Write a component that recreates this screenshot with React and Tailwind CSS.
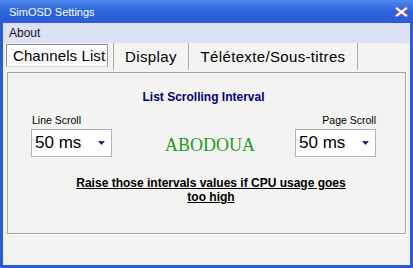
export default function App() {
  const sans = { fontFamily: '"Liberation Sans", Arial, sans-serif' };
  const serif = { fontFamily: '"Liberation Serif", "Times New Roman", serif' };
  const Arrow = () => (
    <svg width="7" height="4" viewBox="0 0 7 4" className="block">
      <polygon points="0,0 7,0 3.5,4" fill="#1c2a78" />
    </svg>
  );
  const Drop = () => (
    <div className="w-[81px] h-[28px] bg-white border border-[#aeb2b8] flex items-center pl-[3px] pr-[6px]">
      <span className="text-[17px] leading-[20px] text-black flex-1" style={sans}>50 ms</span>
      <Arrow />
    </div>
  );
  return (
    <div className="w-[413px] h-[268px] flex flex-col bg-[#2a5cd6] overflow-hidden" style={sans}>
      {/* title bar */}
      <div className="h-[23px] shrink-0 flex items-center px-[9px] bg-gradient-to-b from-[#4f88ec] via-[#2d63dc] to-[#2a5cd6]">
        <span className="text-[11px] text-white flex-1 pt-[1px]">SimOSD Settings</span>
        <svg width="13" height="10" viewBox="0 0 13 10" className="mr-[-4px] mt-[1px]">
          <path d="M2 1.5 L11 8.5 M11 1.5 L2 8.5" stroke="#d46cc0" strokeWidth="3.2" strokeLinecap="square" />
          <path d="M2 1.5 L11 8.5 M11 1.5 L2 8.5" stroke="#ffffff" strokeWidth="1.8" strokeLinecap="square" />
        </svg>
      </div>
      {/* body */}
      <div className="flex-1 mx-[3px] mb-[3px] bg-[#f3f3f1] flex flex-col">
        <div className="h-[20px] shrink-0 bg-[#dce2f3] flex items-center pl-[6px]">
          <span className="text-[12px] text-[#1a1030]">About</span>
        </div>
        {/* tabs */}
        <div className="h-[27px] shrink-0 flex items-stretch">
          <div className="w-[111px] border-r border-[#a8a8a8] pl-[3px] pt-[1px]">
            <div className="w-[102px] h-[23px] bg-[#fbfbfb] border-t border-l border-[#8a8a8a] border-r border-r-[#9a9a9a] border-b border-b-[#d8d8d8] flex items-center pl-[6px]">
              <span className="text-[15px] leading-[18px] text-black tracking-[0.1px]">Channels List</span>
            </div>
          </div>
          <div className="w-[75px] border-r border-[#a8a8a8] flex items-center justify-center">
            <span className="text-[15px] leading-[18px] text-black tracking-[0.4px]">Display</span>
          </div>
          <div className="w-[169px] border-r border-[#a8a8a8] flex items-center justify-center">
            <span className="text-[15px] leading-[18px] text-black tracking-[0.35px]">Télétexte/Sous-titres</span>
          </div>
        </div>
        {/* panel */}
        <div className="mt-[2px] mx-[4px] h-[162px] border border-[#a4a4a4] shadow-[1px_1px_0_#ffffff] flex flex-col">
          <div className="pt-[11px] text-center pr-[6px]">
            <span className="text-[12px] leading-[14px] font-bold text-[#00007a]">List Scrolling Interval</span>
          </div>
          <div className="mt-[6px] flex items-start pl-[23px] pr-[29px]">
            <div className="flex flex-col">
              <span className="text-[10.5px] leading-[13px] text-black pl-[1px] mb-[2px]">Line Scroll</span>
              <Drop />
            </div>
            <div className="ml-[53px] mt-[21px] text-[18px] leading-[20px] text-[#1f9a1f]" style={serif}>ABODOUA</div>
            <div className="ml-auto flex flex-col items-end">
              <span className="text-[10.5px] leading-[13px] text-black mb-[2px]">Page Scroll</span>
              <Drop />
            </div>
          </div>
          <div className="mt-[19px] text-center pl-[9px] text-[12px] leading-[14px] font-bold text-black underline underline-offset-[1px]">
            Raise those intervals values if CPU usage goes
            <br />
            too high
          </div>
        </div>
      </div>
    </div>
  );
}
